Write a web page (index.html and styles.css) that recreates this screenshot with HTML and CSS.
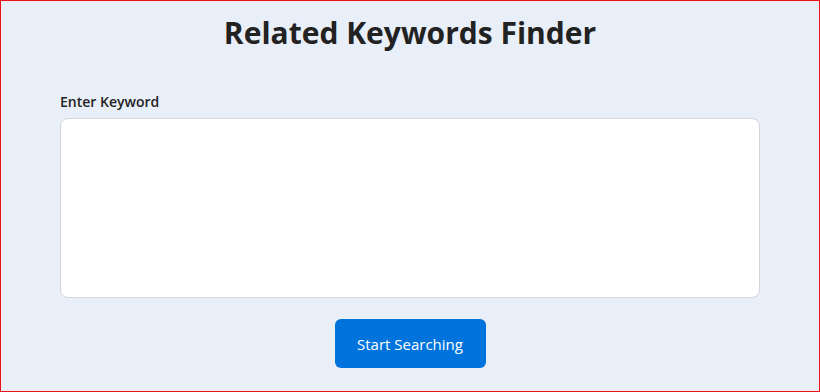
FILE: index.html
```html
<!DOCTYPE html>
<html lang="en">
<head>
    <meta charset="UTF-8">
    <meta name="viewport" content="width=device-width, initial-scale=1.0">
    <title>Related Keywords Finder</title>
    <link rel="stylesheet" href="styles.css">
</head>
<body>
    <main class="tool">
        <h1 class="tool-title">Related Keywords Finder</h1>

        <form class="tool-form">
            <label for="keyword" class="field-label">Enter Keyword</label>
            <textarea id="keyword" name="keyword" class="field-input"></textarea>

            <div class="form-actions">
                <button type="button" class="search-btn">Start Searching</button>
            </div>
        </form>
    </main>
</body>
</html>
```

FILE: styles.css
```css
html, body {
    margin: 0;
    padding: 0;
}

body {
    font-family: "Open Sans", Arial, sans-serif;
    background-color: #e9eff8;
    color: #222;
}

.tool {
    box-sizing: border-box;
    height: 392px;
    border: 1px solid #ee1111;
    padding: 12px 59px 0;
}

.tool-title {
    margin: 0;
    text-align: center;
    font-size: 30px;
    font-weight: 700;
    line-height: 40px;
    color: #222;
}

.tool-form {
    margin-top: 39px;
}

.field-label {
    display: block;
    font-size: 14px;
    font-weight: 600;
    line-height: 20px;
    color: #222;
    margin-bottom: 6px;
}

.field-input {
    display: block;
    box-sizing: border-box;
    width: 100%;
    height: 180px;
    border: 1px solid #d3d6da;
    border-radius: 8px;
    background-color: #fff;
    resize: none;
    padding: 10px;
    font-family: inherit;
    font-size: 15px;
}

.field-input:focus {
    outline: none;
    border-color: #0074dc;
}

.form-actions {
    margin-top: 21px;
    text-align: center;
}

.search-btn {
    display: inline-block;
    width: 151px;
    height: 49px;
    border: none;
    border-radius: 6px;
    background-color: #0074dc;
    color: #fff;
    font-family: inherit;
    font-size: 15px;
    cursor: pointer;
}
```
